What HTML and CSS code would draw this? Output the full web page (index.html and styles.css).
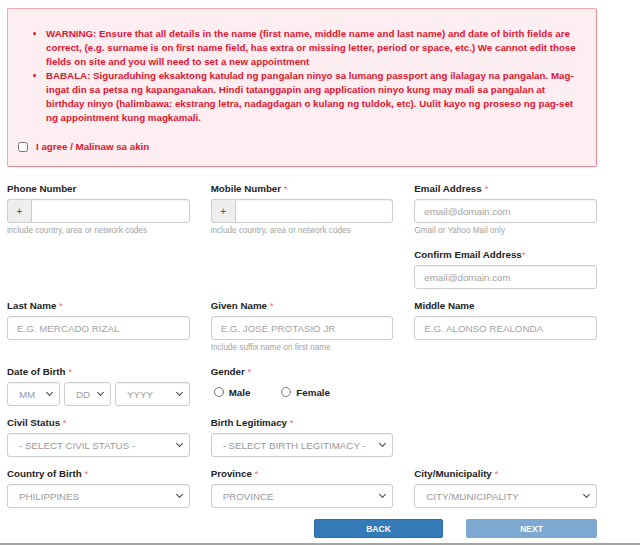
FILE: index.html
```html
<!DOCTYPE html>
<html>
<head>
<meta charset="utf-8">
<link rel="stylesheet" href="styles.css">
</head>
<body>
<div class="page">
  <div class="alert">
    <ul class="alert-list">
      <li>WARNING: Ensure that all details in the name (first name, middle name and last name) and date of birth fields are correct, (e.g. surname is on first name field, has extra or missing letter, period or space, etc.) We cannot edit those fields on site and you will need to set a new appointment</li>
      <li>BABALA: Siguraduhing eksaktong katulad ng pangalan ninyo sa lumang passport ang ilalagay na pangalan. Mag-ingat din sa petsa ng kapanganakan. Hindi tatanggapin ang application ninyo kung may mali sa pangalan at birthday ninyo (halimbawa: ekstrang letra, nadagdagan o kulang ng tuldok, etc). Uulit kayo ng proseso ng pag-set ng appointment kung magkamali.</li>
    </ul>
    <label class="agree"><input type="checkbox" class="agree-box"><span>I agree / Malinaw sa akin</span></label>
  </div>

  <div class="form-grid">
    <div class="cell">
      <div class="group">
        <div class="label">Phone Number</div>
        <div class="input-group"><span class="addon">+</span><input class="control grouped" type="text"></div>
        <div class="help">include country, area or network codes</div>
      </div>
    </div>
    <div class="cell">
      <div class="group">
        <div class="label">Mobile Number <span class="req">*</span></div>
        <div class="input-group"><span class="addon">+</span><input class="control grouped" type="text"></div>
        <div class="help">include country, area or network codes</div>
      </div>
    </div>
    <div class="cell">
      <div class="group">
        <div class="label">Email Address <span class="req">*</span></div>
        <input class="control" type="text" placeholder="email@domain.com">
        <div class="help">Gmail or Yahoo Mail only</div>
      </div>
      <div class="group">
        <div class="label">Confirm Email Address<span class="req">*</span></div>
        <input class="control" type="text" placeholder="email@domain.com">
      </div>
    </div>

    <div class="cell">
      <div class="group">
        <div class="label">Last Name <span class="req">*</span></div>
        <input class="control" type="text" placeholder="E.G. MERCADO RIZAL">
      </div>
    </div>
    <div class="cell">
      <div class="group">
        <div class="label">Given Name <span class="req">*</span></div>
        <input class="control" type="text" placeholder="E.G. JOSÉ PROTASIO JR">
        <div class="help">Include suffix name on first name</div>
      </div>
    </div>
    <div class="cell">
      <div class="group">
        <div class="label">Middle Name</div>
        <input class="control" type="text" placeholder="E.G. ALONSO REALONDA">
      </div>
    </div>

    <div class="cell">
      <div class="group">
        <div class="label">Date of Birth <span class="req">*</span></div>
        <div class="dob">
          <div class="sel"><select class="control select"><option>MM</option></select></div>
          <div class="sel"><select class="control select"><option>DD</option></select></div>
          <div class="sel"><select class="control select"><option>YYYY</option></select></div>
        </div>
      </div>
    </div>
    <div class="cell">
      <div class="group">
        <div class="label">Gender <span class="req">*</span></div>
        <div class="radios">
          <label class="radio"><input type="radio" name="g" class="radio-input"><span>Male</span></label>
          <label class="radio"><input type="radio" name="g" class="radio-input"><span>Female</span></label>
        </div>
      </div>
    </div>
    <div class="cell"></div>

    <div class="cell">
      <div class="group">
        <div class="label">Civil Status <span class="req">*</span></div>
        <div class="sel"><select class="control select"><option>- SELECT CIVIL STATUS -</option></select></div>
      </div>
    </div>
    <div class="cell">
      <div class="group">
        <div class="label">Birth Legitimacy <span class="req">*</span></div>
        <div class="sel"><select class="control select"><option>- SELECT BIRTH LEGITIMACY -</option></select></div>
      </div>
    </div>
    <div class="cell"></div>

    <div class="cell">
      <div class="group">
        <div class="label">Country of Birth <span class="req">*</span></div>
        <div class="sel"><select class="control select"><option>PHILIPPINES</option></select></div>
      </div>
    </div>
    <div class="cell">
      <div class="group">
        <div class="label">Province <span class="req">*</span></div>
        <div class="sel"><select class="control select"><option>PROVINCE</option></select></div>
      </div>
    </div>
    <div class="cell">
      <div class="group">
        <div class="label">City/Municipality <span class="req">*</span></div>
        <div class="sel"><select class="control select"><option>CITY/MUNICIPALITY</option></select></div>
      </div>
    </div>
  </div>

  <div class="actions">
    <button class="btn back">BACK</button>
    <button class="btn next">NEXT</button>
  </div>
</div>
</body>
</html>
```

FILE: styles.css
```css
* { box-sizing: border-box; }
html, body { margin: 0; padding: 0; background: #fff; }
body {
  font-family: "Liberation Sans", Arial, sans-serif;
  color: #222;
}
.page {
  min-height: 100vh;
  padding: 8px 43px 0 7px;
  border-bottom: 2px solid #a3a3a3;
}
.alert {
  background: #fdeef1;
  border: 1px solid #f3a7ae;
  border-right-color: #ee8e97;
  border-bottom-color: #ec8690;
  border-radius: 2px;
  padding: 18px 14px 12px 10px;
  color: #e3152f;
  font-size: 9.75px;
  font-weight: bold;
  line-height: 14px;
}
.alert-list {
  margin: 0;
  padding-left: 28px;
}
.agree {
  display: flex;
  align-items: center;
  margin-top: 15px;
  height: 14px;
}
.agree-box {
  width: 10px;
  height: 10px;
  margin: 0 8px 0 0;
}
.form-grid {
  display: grid;
  grid-template-columns: repeat(3, 1fr);
  column-gap: 21px;
  margin-top: 15px;
}
.group { margin-bottom: 10px; }
.label {
  font-size: 9.75px;
  font-weight: bold;
  line-height: 14px;
  margin-bottom: 3px;
  color: #222;
}
.req { color: #ef6b75; font-weight: normal; }
.control {
  display: block;
  width: 100%;
  height: 24px;
  border: 1px solid #ccc;
  border-radius: 3px;
  padding: 0 9px;
  font-family: "Liberation Sans", Arial, sans-serif;
  font-size: 9.75px;
  color: #555;
  background: #fff;
  box-shadow: inset 0 1px 1px rgba(0,0,0,.06);
  outline: none;
}
.control::placeholder { color: #a3a3a3; }
.sel { position: relative; }
.sel::after {
  content: "";
  position: absolute;
  right: 8px;
  top: 8px;
  width: 4px;
  height: 4px;
  border-right: 1.6px solid #444;
  border-bottom: 1.6px solid #444;
  transform: rotate(45deg);
  pointer-events: none;
}
.select {
  -webkit-appearance: none;
  appearance: none;
  color: #999;
  padding: 0 18px 0 11px;
}
.input-group { display: flex; }
.addon {
  width: 24px;
  height: 24px;
  flex: none;
  display: flex;
  align-items: center;
  justify-content: center;
  background: #eee;
  border: 1px solid #ccc;
  border-right: none;
  border-radius: 3px 0 0 3px;
  font-size: 10px;
  color: #555;
}
.grouped { border-radius: 0 3px 3px 0; flex: 1; }
.help {
  font-size: 8.2px;
  line-height: 14px;
  margin-top: 1px;
  color: #a3a3a3;
}
.dob {
  display: grid;
  grid-template-columns: 53px 47px 1fr;
  gap: 4px;
}
.dob .select { padding: 0 14px 0 11px; }
.radios {
  display: flex;
  align-items: center;
  height: 20px;
  gap: 31px;
  padding-left: 3px;
  margin-bottom: 4px;
}
.radio {
  display: flex;
  align-items: center;
  font-size: 9.75px;
  font-weight: bold;
}
.radio-input {
  width: 10px;
  height: 10px;
  margin: 0 5px 0 0;
}
.actions {
  display: flex;
  justify-content: flex-end;
  gap: 23px;
  margin-top: 1px;
}
.btn {
  height: 19px;
  border: none;
  border-radius: 2px;
  color: #fff;
  font-family: "Liberation Sans", Arial, sans-serif;
  font-size: 8.5px;
  font-weight: bold;
}
.back { width: 129px; background: #337ab7; border: 1px solid #2e6da4; }
.next { width: 131px; background: #7ca8d2; }
```
